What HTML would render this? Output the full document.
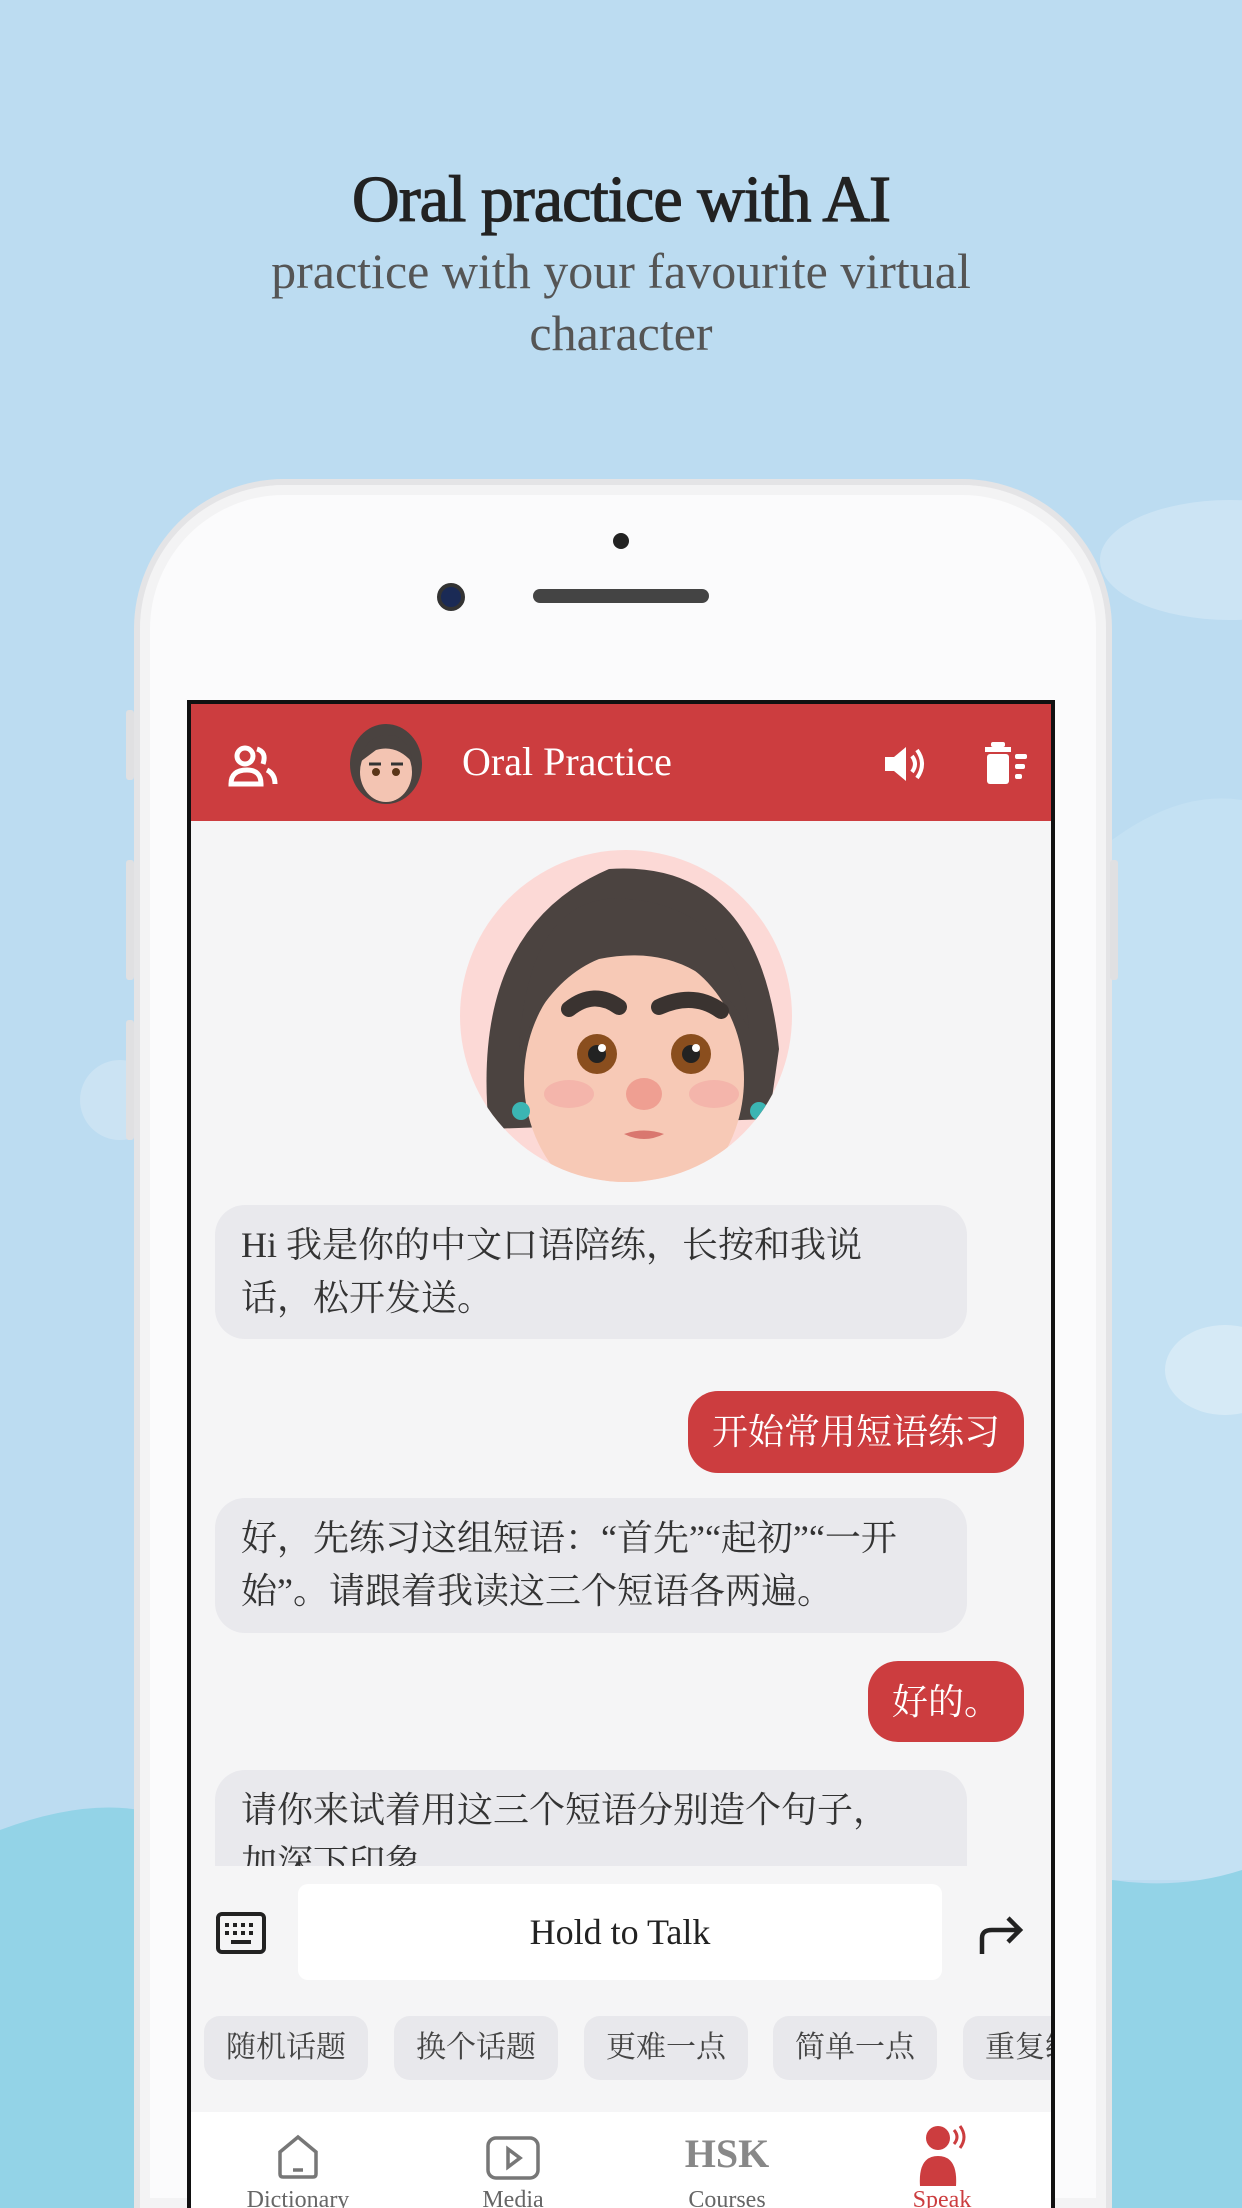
<!DOCTYPE html>
<html style="width:1242px;height:2208px;overflow:hidden"><head><meta charset="utf-8"><style>
*{margin:0;padding:0;box-sizing:border-box}
body{width:1242px;height:2208px;overflow:hidden;position:relative;background:#bcdcf1;font-family:"Liberation Serif","Noto Serif CJK SC",serif}
.abs{position:absolute}
.t1{top:162px;left:0;width:1242px;text-align:center;font-size:66px;color:#222;-webkit-text-stroke:1.2px #222;letter-spacing:-1px}
.t2{top:240px;left:0;width:1242px;text-align:center;font-size:50px;color:#555;line-height:62px}
.cjk{font-family:"Liberation Serif","Noto Serif CJK SC",serif}
.bub{position:absolute;background:#e9e9ed;border-radius:30px;font-size:36px;color:#333;line-height:53px;padding:14px 44px 10px 26px}
.me{position:absolute;background:#cc3d3f;color:#fff;border-radius:30px;font-size:36px;line-height:82px;padding:0 24px}
.chip{position:absolute;top:2016px;height:64px;width:164px;background:#e8e8ec;border-radius:16px;font-size:30px;color:#444;text-align:center;line-height:64px}
.nav{position:absolute;top:2186px;height:22px;overflow:hidden;font-size:24px;line-height:28px;color:#666;text-align:center;width:160px}
</style></head><body>
<div class="abs" style="left:0;top:0;width:1242px;height:2208px;overflow:hidden">
<svg class="abs" style="left:0;top:0" width="1242" height="2208">
<ellipse cx="1230" cy="560" rx="130" ry="60" fill="#cce4f4"/>
<path d="M1112 840 Q1180 790 1242 800 L1242 1880 L1112 1880Z" fill="#c4e1f3"/>
<ellipse cx="1225" cy="1370" rx="60" ry="45" fill="#d6eaf6"/>
<ellipse cx="120" cy="1100" rx="40" ry="40" fill="#cbe3f3"/>
<path d="M0 1830 Q80 1800 140 1810 L140 2208 L0 2208Z" fill="#93d3e7"/>
<path d="M1112 1880 Q1180 1890 1242 1870 L1242 2208 L1112 2208Z" fill="#93d3e7"/>
</svg>
<div class="abs t1">Oral practice with AI</div>
<div class="abs t2">practice with your favourite virtual<br>character</div>
<div class="abs" style="left:134px;top:479px;width:978px;height:1729px;background:#fbfbfc;border-radius:150px 150px 0 0;border:6px solid #e4e4e6;border-bottom:none;box-shadow:inset 0 0 0 10px #f3f3f4"></div>
<div class="abs" style="left:126px;top:710px;width:8px;height:70px;background:#e0e0e2;border-radius:3px"></div>
<div class="abs" style="left:126px;top:860px;width:8px;height:120px;background:#e0e0e2;border-radius:3px"></div>
<div class="abs" style="left:126px;top:1020px;width:8px;height:120px;background:#e0e0e2;border-radius:3px"></div>
<div class="abs" style="left:1110px;top:860px;width:8px;height:120px;background:#e0e0e2;border-radius:3px"></div>
<div class="abs" style="left:613px;top:533px;width:16px;height:16px;border-radius:50%;background:#222"></div>
<div class="abs" style="left:437px;top:583px;width:28px;height:28px;border-radius:50%;background:#1a2a55;border:4px solid #333"></div>
<div class="abs" style="left:533px;top:589px;width:176px;height:14px;border-radius:7px;background:#444"></div>
<div class="abs" style="left:187px;top:700px;width:868px;height:1508px;background:#f5f5f6;border:4px solid #111;border-bottom:none;overflow:hidden">
 <div class="abs" style="left:0;top:0;width:864px;height:117px;background:#cc3d3f"></div>
 <svg class="abs" style="left:36px;top:40px" width="52" height="44" viewBox="0 0 52 44" fill="none" stroke="#fff" stroke-width="5"><circle cx="18" cy="12" r="8"/><path d="M4 40 Q4 26 20 26 Q34 26 34 40Z"/><path d="M30 5 Q40 8 36 20 M40 26 Q48 30 48 40"/></svg>
 <svg class="abs" style="left:155px;top:18px" width="80" height="84" viewBox="0 0 80 84"><ellipse cx="40" cy="42" rx="36" ry="40" fill="#4a4340"/><ellipse cx="40" cy="50" rx="26" ry="30" fill="#f3c4b2"/><path d="M14 40 Q20 8 50 14 Q66 22 66 40 Q50 22 30 28Z" fill="#4a4340"/><circle cx="30" cy="50" r="4" fill="#5a3518"/><circle cx="50" cy="50" r="4" fill="#5a3518"/><path d="M23 42h12M45 42h12" stroke="#333" stroke-width="3"/></svg>
 <div class="abs" style="left:271px;top:34px;color:#fff;font-size:40px">Oral Practice</div>
 <svg class="abs" style="left:692px;top:40px" width="44" height="40" viewBox="0 0 44 40"><path d="M2 13h9l12-10v34L11 27H2Z" fill="#fff"/><path d="M29 12 Q35 20 29 28 M34 6 Q44 20 34 34" stroke="#fff" stroke-width="4" fill="none"/></svg>
 <svg class="abs" style="left:792px;top:38px" width="46" height="44" viewBox="0 0 46 44" fill="#fff"><rect x="8" y="0" width="14" height="5" rx="2"/><rect x="2" y="5" width="26" height="5"/><rect x="4" y="12" width="22" height="30" rx="3"/><rect x="32" y="12" width="12" height="5" rx="2"/><rect x="32" y="22" width="10" height="5" rx="2"/><rect x="32" y="32" width="7" height="5" rx="2"/></svg>
 <svg class="abs" style="left:268px;top:145px" width="334" height="334" viewBox="0 0 334 334"><defs><clipPath id="c"><circle cx="167" cy="167" r="166"/></clipPath></defs><circle cx="167" cy="167" r="166" fill="#fcd9d6"/><g clip-path="url(#c)"><path d="M30 280 Q10 80 150 20 Q300 10 320 200 L310 270 L30 280Z" fill="#4b4340"/><ellipse cx="175" cy="230" rx="110" ry="130" fill="#f7c9b6"/><path d="M60 200 Q70 40 170 50 Q280 60 290 180 Q240 90 140 110 Q90 130 60 200Z" fill="#4b4340"/><path d="M110 160 Q135 140 160 158M200 158 Q235 142 262 162" stroke="#3a3330" stroke-width="16" fill="none" stroke-linecap="round"/><circle cx="138" cy="205" r="20" fill="#8a4e1e"/><circle cx="232" cy="205" r="20" fill="#8a4e1e"/><circle cx="138" cy="205" r="9" fill="#222"/><circle cx="232" cy="205" r="9" fill="#222"/><circle cx="143" cy="199" r="4" fill="#fff"/><circle cx="237" cy="199" r="4" fill="#fff"/><ellipse cx="185" cy="245" rx="18" ry="16" fill="#ef9f92"/><path d="M165 285 Q185 295 205 285 Q185 278 165 285Z" fill="#d9776f"/><ellipse cx="110" cy="245" rx="25" ry="14" fill="#f2a9a3" opacity=".6"/><ellipse cx="255" cy="245" rx="25" ry="14" fill="#f2a9a3" opacity=".6"/><circle cx="62" cy="262" r="9" fill="#3bb5b3"/><circle cx="300" cy="262" r="9" fill="#3bb5b3"/></g></svg>
</div>
<div class="bub cjk" style="left:215px;top:1205px;width:752px;height:134px">Hi 我是你的中文口语陪练，长按和我说话，松开发送。</div>
<div class="me cjk" style="right:218px;top:1391px;height:82px">开始常用短语练习</div>
<div class="bub cjk" style="left:215px;top:1498px;width:752px;height:135px">好，先练习这组短语：“首先”“起初”“一开始”。请跟着我读这三个短语各两遍。</div>
<div class="me cjk" style="right:218px;top:1661px;height:81px">好的。</div>
<div class="abs" style="left:215px;top:1770px;width:752px;height:96px;overflow:hidden"><div class="bub cjk" style="left:0;top:0;width:752px;height:140px">请你来试着用这三个短语分别造个句子，加深下印象</div></div>
<svg class="abs" style="left:216px;top:1912px" width="50" height="42" viewBox="0 0 50 42"><rect x="2" y="2" width="46" height="38" rx="4" fill="none" stroke="#222" stroke-width="4"/><g fill="#222"><rect x="9" y="11" width="4" height="4"/><rect x="17" y="11" width="4" height="4"/><rect x="25" y="11" width="4" height="4"/><rect x="33" y="11" width="4" height="4"/><rect x="9" y="19" width="4" height="4"/><rect x="17" y="19" width="4" height="4"/><rect x="25" y="19" width="4" height="4"/><rect x="33" y="19" width="4" height="4"/><rect x="15" y="28" width="20" height="4"/></g></svg>
<div class="abs" style="left:298px;top:1884px;width:644px;height:96px;background:#fff;border-radius:10px;text-align:center;line-height:96px;font-size:36px;color:#222">Hold to Talk</div>
<svg class="abs" style="left:976px;top:1912px" width="48" height="44" viewBox="0 0 48 44"><path d="M6 42 V26 Q6 18 16 18 H42 M32 6 L44 18 L32 30" stroke="#222" stroke-width="4.5" fill="none"/></svg>
<div class="chip cjk" style="left:204px">随机话题</div>
<div class="chip cjk" style="left:394px">换个话题</div>
<div class="chip cjk" style="left:584px">更难一点</div>
<div class="chip cjk" style="left:773px">简单一点</div>
<div class="abs" style="left:963px;top:2016px;width:88px;height:64px;overflow:hidden"><div class="chip cjk" style="left:0;top:0">重复练习</div></div>
<div class="abs" style="left:191px;top:2112px;width:860px;height:96px;background:#fff"></div>
<svg class="abs" style="left:276px;top:2134px" width="44" height="46" viewBox="0 0 44 46"><path d="M4 18 L22 3 L40 18 V40 Q40 43 37 43 H7 Q4 43 4 40Z" fill="none" stroke="#777" stroke-width="3.5"/><path d="M17 36 h10" stroke="#777" stroke-width="3.5"/></svg>
<svg class="abs" style="left:486px;top:2136px" width="54" height="44" viewBox="0 0 54 44"><rect x="2" y="2" width="50" height="40" rx="8" fill="none" stroke="#777" stroke-width="3.5"/><path d="M22 13 L34 22 L22 31Z" fill="none" stroke="#777" stroke-width="3.5"/></svg>
<div class="abs" style="left:660px;top:2130px;width:134px;text-align:center;font-size:40px;font-weight:bold;color:#888">HSK</div>
<svg class="abs" style="left:914px;top:2124px" width="56" height="62" viewBox="0 0 56 62"><circle cx="24" cy="14" r="12" fill="#cc3d3f"/><path d="M6 62 Q4 32 24 32 Q44 32 42 62Z" fill="#cc3d3f"/><path d="M40 6 Q46 13 40 20 M46 2 Q54 13 46 24" stroke="#cc3d3f" stroke-width="3" fill="none"/></svg>
<div class="nav" style="left:218px">Dictionary</div>
<div class="nav" style="left:433px">Media</div>
<div class="nav" style="left:647px">Courses</div>
<div class="nav" style="left:862px;color:#cc3d3f">Speak</div>
</div>
</body></html>
